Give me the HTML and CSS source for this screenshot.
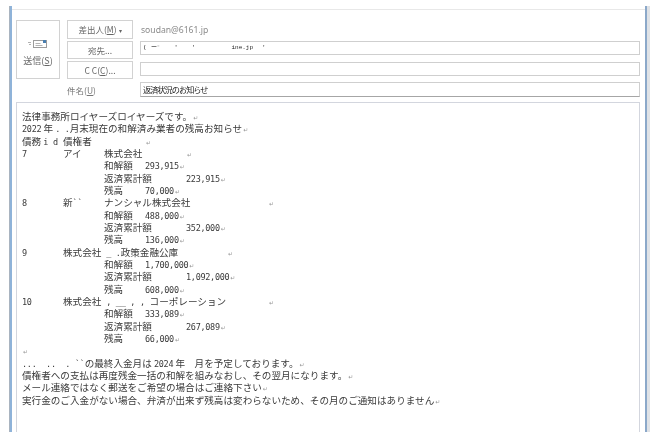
FILE: index.html
```html
<!DOCTYPE html>
<html lang="ja">
<head>
<meta charset="utf-8">
<title>返済状況のお知らせ</title>
<link rel="stylesheet" href="styles.css">
</head>
<body>
<div class="window">
  <div class="rule"></div>
  <div class="compose">
    <button class="send">
      <svg class="send-icon" width="20" height="10" viewBox="0 0 20 10">
        <path d="M0 3.5h3M1 5.5h2" stroke="#b0b0b0" fill="none"/>
        <rect x="5.5" y="1.5" width="13" height="7" fill="#fff" stroke="#9c9c9c"/>
        <path d="M7.5 4.5h5M7.5 6.5h7" stroke="#b4b4b4" fill="none"/>
        <rect x="15" y="1" width="3" height="3" fill="#4a7fb0"/>
      </svg>
      <span>送信(<u>S</u>)</span>
    </button>
    <button class="btn from">差出人(<u>M</u>) <span class="caret">▾</span></button>
    <div class="address">soudan@6161.jp</div>
    <button class="btn to">宛先...</button>
    <div class="field to-field"><span class="specks">(<i class="gap-a"></i>ー⁻<i class="gap-b"></i>'<i class="gap-c"></i>'<i class="gap-d"></i>ine.jp<i class="gap-e"></i>'</span></div>
    <button class="btn cc">C C(<u>C</u>)...</button>
    <div class="field cc-field"></div>
    <div class="subject-label">件名(<u>U</u>)</div>
    <div class="field subject">返済状況のお知らせ</div>
  </div>
  <div class="message">
<div class="ln">法律事務所ロイヤーズロイヤーズです。<b>↵</b></div>
<div class="ln"><em>2022</em> 年 <em>. .</em>月末現在の和解済み業者の残高お知らせ<b>↵</b></div>
<div class="ln">債務 <em>i d</em>	債権者		<b>↵</b></div>
<div class="ln"><em>7</em>	アイ	株式会社		<b>↵</b></div>
<div class="ln">		和解額	<em>293,915</em><b>↵</b></div>
<div class="ln">		返済累計額	<em>223,915</em><b>↵</b></div>
<div class="ln">		残高	<em>70,000</em><b>↵</b></div>
<div class="ln"><em>8</em>	新<em>``</em>	ナンシャル株式会社		<b>↵</b></div>
<div class="ln">		和解額	<em>488,000</em><b>↵</b></div>
<div class="ln">		返済累計額	<em>352,000</em><b>↵</b></div>
<div class="ln">		残高	<em>136,000</em><b>↵</b></div>
<div class="ln"><em>9</em>	株式会社<em> _ .</em>政策金融公庫		<b>↵</b></div>
<div class="ln">		和解額	<em>1,700,000</em><b>↵</b></div>
<div class="ln">		返済累計額	<em>1,092,000</em><b>↵</b></div>
<div class="ln">		残高	<em>608,000</em><b>↵</b></div>
<div class="ln"><em>10</em>	株式会社<em> , __ , , </em>コーポレーション	<b>↵</b></div>
<div class="ln">		和解額	<em>333,089</em><b>↵</b></div>
<div class="ln">		返済累計額	<em>267,089</em><b>↵</b></div>
<div class="ln">		残高	<em>66,000</em><b>↵</b></div>
<div class="ln"><b>↵</b></div>
<div class="ln"><em>...  ..  . ``</em>の最終入金月は <em>2024</em> 年　月を予定しております。<b>↵</b></div>
<div class="ln">債権者への支払は再度残金一括の和解を組みなおし、その翌月になります。<b>↵</b></div>
<div class="ln">メール連絡ではなく郵送をご希望の場合はご連絡下さい<b>↵</b></div>
<div class="ln">実行金のご入金がない場合、弁済が出来ず残高は変わらないため、その月のご通知はありません<b>↵</b></div>
  </div>
</div>
</body>
</html>
```
FILE: styles.css
```css
html, body {
  margin: 0;
  padding: 0;
  height: 100%;
  background: #fff;
  overflow: hidden;
}
body {
  padding: 6px 11px 4px 10px;
  box-sizing: border-box;
  font-family: "Noto Sans CJK JP", sans-serif;
  color: #444;
}
.window {
  height: 100%;
  box-sizing: border-box;
  border-left: 2px solid #8fb3d9;
  border-right: 2px solid #8ba8c9;
  box-shadow: -1px 0 0 #a9b4c0, 3px 0 0 #dfe2e6;
  display: flex;
  flex-direction: column;
  padding: 3px 0 0;
}
.rule {
  height: 1px;
  background: #e8e8e8;
}
.compose {
  display: grid;
  grid-template-columns: 44px 66px 1fr;
  grid-template-rows: 19px 18px 18px 17px;
  column-gap: 7px;
  row-gap: 2px;
  margin: 10px 5px 0 4px;
  align-items: center;
  filter: blur(0.25px);
}
.send {
  grid-row: 1 / 4;
  height: 100%;
  border: 1px solid #d2d2d2;
  background: #fff;
  padding: 18px 0 0;
  display: flex;
  flex-direction: column;
  align-items: center;
  gap: 6px;
  font: inherit;
  font-size: 9px;
  line-height: 12px;
  color: #666;
}
.btn {
  height: 100%;
  border: 1px solid #d2d2d2;
  background: #fff;
  padding: 0;
  font: inherit;
  font-size: 8.5px;
  line-height: 12px;
  color: #666;
}
.caret {
  font-size: 6px;
}
.address {
  font-family: "Noto Sans", sans-serif;
  font-size: 8.6px;
  color: #8a8a8a;
  padding-left: 1px;
}
.field {
  height: 14px;
  box-sizing: border-box;
  border: 1px solid #cfcfcf;
  background: #fff;
  padding-left: 2px;
}
.to-field {
  align-self: start;
}
.cc-field {
  align-self: start;
  margin-top: 1px;
}
.specks {
  display: block;
  font-family: "Liberation Mono", monospace;
  font-size: 6px;
  line-height: 11px;
  color: #222;
  white-space: pre;
}
.specks i {
  display: inline-block;
}
.gap-a { width: 4px; }
.gap-b { width: 14px; }
.gap-c { width: 14px; }
.gap-d { width: 36px; }
.gap-e { width: 9px; }
.subject-label {
  grid-column: 2;
  font-size: 8.5px;
  color: #777;
}
.subject {
  height: 15px;
  border-bottom-color: #a6a6a6;
  font-size: 8.2px;
  letter-spacing: -1px;
  line-height: 12px;
  color: #222;
}
.message {
  flex: 1;
  margin: 4px 5px 0 4px;
  border: 1px solid #d3d6de;
  border-bottom: 0;
  padding: 7px 0 0 5px;
  font-size: 9.6px;
  color: #3a3a3a;
  filter: blur(0.25px);
}
.ln {
  height: 12.33px;
  line-height: 12.33px;
  white-space: pre;
  tab-size: 41px;
}
.ln em {
  font-family: "DejaVu Sans Mono", monospace;
  font-style: normal;
  font-size: 8.5px;
  letter-spacing: -0.3px;
}
.ln b {
  font-family: "DejaVu Sans", sans-serif;
  font-weight: normal;
  font-size: 6px;
  color: #999;
  margin-left: 1px;
}
```
